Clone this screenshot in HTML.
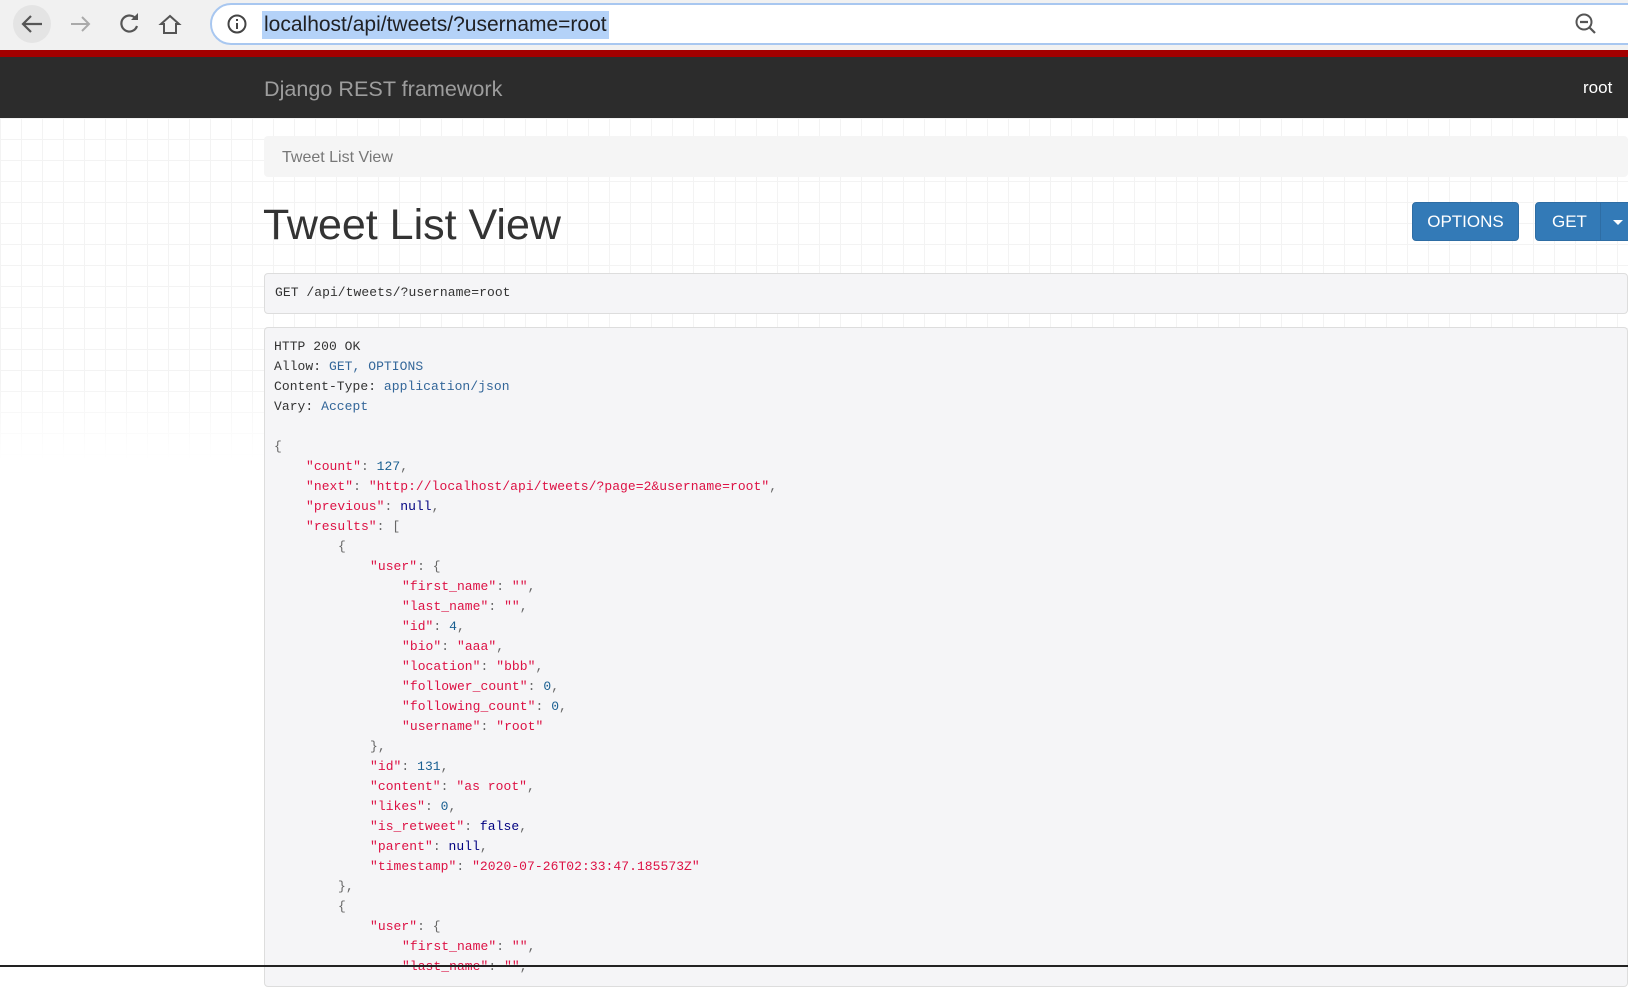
<!DOCTYPE html>
<html><head><meta charset="utf-8"><style>
*{box-sizing:border-box;margin:0;padding:0}
body{width:1628px;height:967px;overflow:hidden;background:#fff;font-family:"Liberation Sans",sans-serif;position:relative}
.tb{position:absolute;left:0;top:0;width:1628px;height:51px;background:#f1f1f1}
.addr{position:absolute;left:210px;top:3px;width:1440px;height:42px;border:2px solid #a8c7f0;border-radius:21px;background:#fff}
.url{position:absolute;left:50px;top:6px;font-size:21px;color:#202124;background:#b4d2f8;padding:1px 2px;line-height:26px}
.red{position:absolute;left:0;top:50px;width:1628px;height:7px;background:#a30000}
.nav{position:absolute;left:0;top:57px;width:1628px;height:61px;background:#2c2c2c}
.brand{position:absolute;left:264px;top:19px;font-size:21.6px;color:#9d9d9d}
.root{position:absolute;left:1583px;top:21px;font-size:17px;color:#fff}
.grid{position:absolute;left:0;top:118px;width:1628px;height:849px;background-image:linear-gradient(#f3f3f3 1px,transparent 1px),linear-gradient(90deg,#f3f3f3 1px,transparent 1px);background-size:21px 21px}
.fade{position:absolute;left:0;top:380px;width:264px;height:587px;background:linear-gradient(#fff0,#fff 80px)}
.bc{position:absolute;left:264px;top:136px;width:1364px;height:41px;background:#f5f5f5;border-radius:4px}
.bc span{position:absolute;left:18px;top:13px;font-size:16px;color:#777}
h1{position:absolute;left:263px;top:201px;font-size:43px;font-weight:normal;color:#333}
.btn{position:absolute;top:202px;height:39px;background:#337ab7;border:1px solid #2e6da4;border-radius:4px;color:#fff;font-size:17px;line-height:37px;text-align:center}
.req{position:absolute;left:264px;top:273px;width:1364px;height:41px;background:#f5f5f7;border:1px solid #ddd;border-radius:4px}
.mono,.mono *,.l{font-family:"Liberation Mono","DejaVu Sans Mono","Courier New",monospace;font-size:13px;letter-spacing:0.05px}
.req div{position:absolute;left:10px;top:11px;color:#333}
.resp{position:absolute;left:264px;top:327px;width:1364px;height:660px;background:#f5f5f7;border:1px solid #ddd;border-radius:4px}
.in{position:absolute;left:0;top:-1px;width:100%;height:100%}
.l{position:absolute;height:20px;line-height:20px;white-space:pre;color:#333}
.s{color:#dd1144}.n{color:#195f91}.p{color:#666}.k{color:#000080}.h{color:#336699}
</style></head><body>
<div class="tb">
<svg width="200" height="50" style="position:absolute;left:0;top:0">
<circle cx="32" cy="24" r="19" fill="#e4e4e4"/>
<path d="M42 24H23M31 16l-8 8 8 8" stroke="#555" stroke-width="2.2" fill="none"/>
<path d="M71 24h18M82 17l7 7-7 7" stroke="#aaa" stroke-width="2" fill="none"/>
<path d="M136 19a8 8 0 1 0 1 7" stroke="#555" stroke-width="2.2" fill="none"/><path d="M138 13v7h-7" fill="#555"/>
<path d="M170 16l-9 8h3v9h12v-9h3z" stroke="#555" stroke-width="2" fill="none"/>
</svg>
<div class="addr"><svg width="24" height="24" style="position:absolute;left:14px;top:8px"><circle cx="11" cy="11" r="8.5" stroke="#444" stroke-width="2" fill="none"/><rect x="10" y="10" width="2" height="6" fill="#444"/><rect x="10" y="6" width="2" height="2" fill="#444"/></svg>
<span class="url">localhost/api/tweets/?username=root</span>
<svg width="30" height="30" style="position:absolute;left:1360px;top:5px"><circle cx="12" cy="12" r="7.5" stroke="#555" stroke-width="2" fill="none"/><path d="M8 12h8M17 17l6 6" stroke="#555" stroke-width="2.2"/></svg>
</div></div>
<div class="red"></div>
<div class="nav"><div class="brand">Django REST framework</div><div class="root">root</div></div>
<div class="grid"></div><div class="fade"></div>
<div class="bc"><span>Tweet List View</span></div>
<h1>Tweet List View</h1>
<div class="btn" style="left:1412px;width:107px">OPTIONS</div>
<div class="btn" style="left:1535px;width:100px;text-align:left;padding-left:16px">GET<span style="position:absolute;left:64px;top:0;bottom:0;border-left:1px solid #2e6da4;width:40px"></span><svg width="10" height="6" style="position:absolute;left:77px;top:17px"><path d="M0 0h10L5 5z" fill="#fff"/></svg></div>
<div class="req"><div class="mono">GET /api/tweets/?username=root</div></div>
<div class="resp mono"><div class="in">
<div class="l" style="left:9px;top:10px">HTTP 200 OK</div>
<div class="l" style="left:9px;top:30px">Allow: <span class="h">GET, OPTIONS</span></div>
<div class="l" style="left:9px;top:50px">Content-Type: <span class="h">application/json</span></div>
<div class="l" style="left:9px;top:70px">Vary: <span class="h">Accept</span></div>
<div class="l p" style="left:9px;top:110px">{</div>
<div class="l" style="left:41px;top:130px"><span class="s">"count"</span><span class="p">: </span><span class="n">127</span><span class="p">,</span></div>
<div class="l" style="left:41px;top:150px"><span class="s">"next"</span><span class="p">: </span><span class="s">"http://localhost/api/tweets/?page=2&amp;username=root"</span><span class="p">,</span></div>
<div class="l" style="left:41px;top:170px"><span class="s">"previous"</span><span class="p">: </span><span class="k">null</span><span class="p">,</span></div>
<div class="l" style="left:41px;top:190px"><span class="s">"results"</span><span class="p">: [</span></div>
<div class="l p" style="left:73px;top:210px">{</div>
<div class="l" style="left:105px;top:230px"><span class="s">"user"</span><span class="p">: {</span></div>
<div class="l" style="left:137px;top:250px"><span class="s">"first_name"</span><span class="p">: </span><span class="s">""</span><span class="p">,</span></div>
<div class="l" style="left:137px;top:270px"><span class="s">"last_name"</span><span class="p">: </span><span class="s">""</span><span class="p">,</span></div>
<div class="l" style="left:137px;top:290px"><span class="s">"id"</span><span class="p">: </span><span class="n">4</span><span class="p">,</span></div>
<div class="l" style="left:137px;top:310px"><span class="s">"bio"</span><span class="p">: </span><span class="s">"aaa"</span><span class="p">,</span></div>
<div class="l" style="left:137px;top:330px"><span class="s">"location"</span><span class="p">: </span><span class="s">"bbb"</span><span class="p">,</span></div>
<div class="l" style="left:137px;top:350px"><span class="s">"follower_count"</span><span class="p">: </span><span class="n">0</span><span class="p">,</span></div>
<div class="l" style="left:137px;top:370px"><span class="s">"following_count"</span><span class="p">: </span><span class="n">0</span><span class="p">,</span></div>
<div class="l" style="left:137px;top:390px"><span class="s">"username"</span><span class="p">: </span><span class="s">"root"</span></div>
<div class="l p" style="left:105px;top:410px">},</div>
<div class="l" style="left:105px;top:430px"><span class="s">"id"</span><span class="p">: </span><span class="n">131</span><span class="p">,</span></div>
<div class="l" style="left:105px;top:450px"><span class="s">"content"</span><span class="p">: </span><span class="s">"as root"</span><span class="p">,</span></div>
<div class="l" style="left:105px;top:470px"><span class="s">"likes"</span><span class="p">: </span><span class="n">0</span><span class="p">,</span></div>
<div class="l" style="left:105px;top:490px"><span class="s">"is_retweet"</span><span class="p">: </span><span class="k">false</span><span class="p">,</span></div>
<div class="l" style="left:105px;top:510px"><span class="s">"parent"</span><span class="p">: </span><span class="k">null</span><span class="p">,</span></div>
<div class="l" style="left:105px;top:530px"><span class="s">"timestamp"</span><span class="p">: </span><span class="s">"2020-07-26T02:33:47.185573Z"</span></div>
<div class="l p" style="left:73px;top:550px">},</div>
<div class="l p" style="left:73px;top:570px">{</div>
<div class="l" style="left:105px;top:590px"><span class="s">"user"</span><span class="p">: {</span></div>
<div class="l" style="left:137px;top:610px"><span class="s">"first_name"</span><span class="p">: </span><span class="s">""</span><span class="p">,</span></div>
<div class="l" style="left:137px;top:630px"><span class="s">"last_name"</span><span class="p">: </span><span class="s">""</span><span class="p">,</span></div>
</div></div>
<div style="position:absolute;left:0;top:965px;width:1628px;height:2px;background:#222"></div>
</body></html>
